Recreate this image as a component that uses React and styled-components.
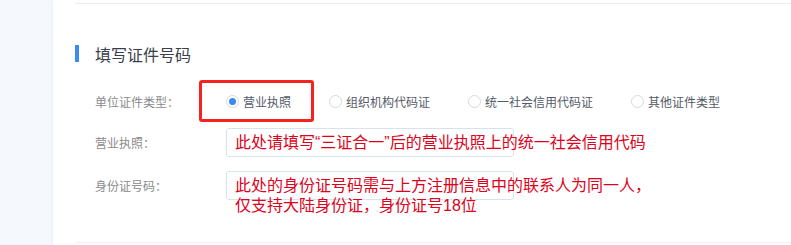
import React from 'react';
import styled, { createGlobalStyle } from 'styled-components';

const GlobalStyle = createGlobalStyle`
    html, body {
        margin: 0;
        padding: 0;
        background: #f5f8fd;
        font-family: "Noto Sans CJK SC", "Noto Sans", sans-serif;
    }
`;

const Page = styled.div`
    display: flex;
    height: 245px;
    overflow: hidden;
`;

const Side = styled.div`
    width: 53px;
    flex: none;
    background: #f5f8fd;
`;

const Panel = styled.div`
    flex: 1;
    background: #fff;
    padding: 3px 0 0 22px;
    box-shadow: -1px 0 2px rgba(120, 140, 180, .08);
`;

const Divider = styled.div`
    height: 1px;
    background: ${p => p.$light ? '#eef2f8' : '#ececec'};
`;

const Section = styled.div`
    padding: 41px 0 0;
    height: 238px;
    box-sizing: border-box;
`;

const Title = styled.h3`
    display: flex;
    align-items: center;
    gap: 16px;
    margin: 0 0 25px;
    height: 17px;
    font-size: 16px;
    font-weight: normal;
    color: #3a3f4d;
    &::before {
        content: '';
        width: 4px;
        height: 17px;
        background: #3a8bf6;
    }
`;

const Row = styled.div`
    display: flex;
    align-items: center;
    height: ${p => p.$h || 29}px;
    margin-bottom: ${p => p.$mb || 14}px;
    padding-left: 20px;
`;

const Label = styled.div`
    width: 131px;
    flex: none;
    font-size: 12px;
    color: #8a8a8a;
`;

const RadioGroup = styled.div`
    display: flex;
    align-items: center;
    gap: 38px;
`;

const Option = styled.label`
    position: relative;
    display: flex;
    align-items: center;
    gap: 4px;
    font-size: 12px;
    color: #555a66;
`;

const Circle = styled.span`
    width: 13px;
    height: 13px;
    box-sizing: border-box;
    border-radius: 50%;
    border: 1px solid #d3d9e2;
    display: flex;
    align-items: center;
    justify-content: center;
    &::after {
        content: '';
        display: ${p => p.$checked ? 'block' : 'none'};
        width: 7px;
        height: 7px;
        border-radius: 50%;
        background: #3a8bf6;
    }
`;

const Highlight = styled.span`
    position: absolute;
    left: -27px;
    top: 50%;
    margin-top: -22px;
    width: 115px;
    height: 42px;
    box-sizing: border-box;
    border: 3px solid #f5221e;
    border-radius: 3px;
    pointer-events: none;
`;

const Field = styled.div`
    position: relative;
    width: 288px;
    height: 29px;
    box-sizing: border-box;
    border: 1px solid #d8e2ee;
    border-radius: 3px;
    background: #fff;
`;

const Note = styled.div`
    position: absolute;
    left: 8px;
    top: 4px;
    white-space: nowrap;
    font-family: "Liberation Sans", "Noto Sans CJK SC", sans-serif;
    font-size: 16px;
    line-height: 20px;
    color: #e0001b;
`;

const types = ['营业执照', '组织机构代码证', '统一社会信用代码证', '其他证件类型'];

const App = () => {
    return (
        <Page>
            <GlobalStyle />
            <Side />
            <Panel>
                <Divider />
                <Section>
                    <Title>填写证件号码</Title>
                    <Row $h={29} $mb={12}>
                        <Label>单位证件类型：</Label>
                        <RadioGroup>
                            {types.map((t, i) => (
                                <Option key={t}>
                                    <Circle $checked={i === 0} />
                                    {t}
                                    {i === 0 && <Highlight />}
                                </Option>
                            ))}
                        </RadioGroup>
                    </Row>
                    <Row $mb={14}>
                        <Label>营业执照：</Label>
                        <Field>
                            <Note>此处请填写“三证合一”后的营业执照上的统一社会信用代码</Note>
                        </Field>
                    </Row>
                    <Row $mb={0}>
                        <Label>身份证号码：</Label>
                        <Field>
                            <Note>
                                此处的身份证号码需与上方注册信息中的联系人为同一人，<br />
                                仅支持大陆身份证，身份证号18位
                            </Note>
                        </Field>
                    </Row>
                </Section>
                <Divider $light />
            </Panel>
        </Page>
    );
};

export default App;
